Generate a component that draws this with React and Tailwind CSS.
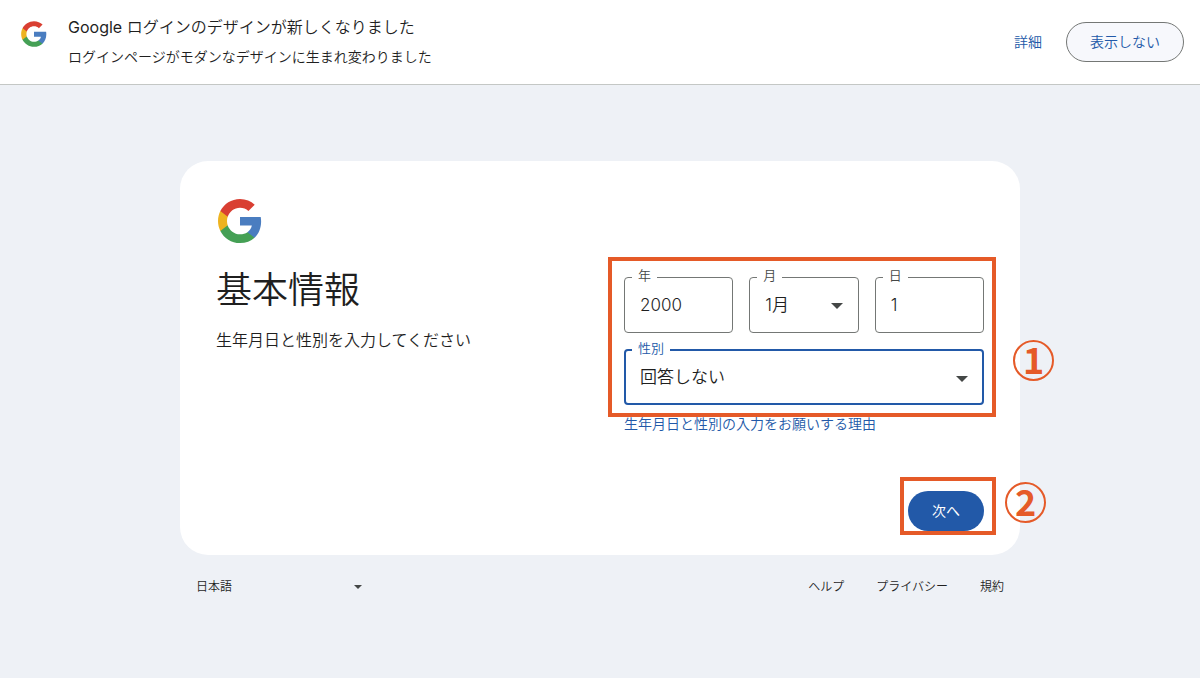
import { useState } from "react";

const months = ["1月", "2月", "3月", "4月", "5月", "6月", "7月", "8月", "9月", "10月", "11月", "12月"];
const genders = ["女性", "男性", "回答しない", "カスタム"];

const footerLinks = [
  { label: "ヘルプ", href: "#help" },
  { label: "プライバシー", href: "#privacy" },
  { label: "規約", href: "#terms" },
];

const GoogleLogo = ({ className }) => (
  <svg viewBox="0 0 48 48" className={className} aria-hidden="true">
    <path
      fill="#4a7dc0"
      d="M45.12 24.5c0-1.56-.14-3.06-.4-4.5H24v8.51h11.84c-.51 2.75-2.06 5.08-4.39 6.64v5.52h7.11c4.16-3.83 6.56-9.47 6.56-16.17z"
    />
    <path
      fill="#45a055"
      d="M24 46c5.94 0 10.92-1.97 14.56-5.33l-7.11-5.52c-1.97 1.32-4.49 2.1-7.45 2.1-5.73 0-10.58-3.87-12.31-9.07H4.34v5.7C7.96 41.07 15.4 46 24 46z"
    />
    <path
      fill="#eeb320"
      d="M11.69 28.18C11.25 26.86 11 25.45 11 24s.25-2.86.69-4.18v-5.7H4.34C2.85 17.09 2 20.45 2 24c0 3.55.85 6.91 2.34 9.88l7.35-5.7z"
    />
    <path
      fill="#d93f32"
      d="M24 10.75c3.23 0 6.13 1.11 8.41 3.29l6.31-6.31C34.91 4.18 29.93 2 24 2 15.4 2 7.96 6.93 4.34 14.12l7.35 5.7c1.73-5.2 6.58-9.07 12.31-9.07z"
    />
  </svg>
);

const Caret = ({ className }) => (
  <svg viewBox="0 0 12 6" className={className} aria-hidden="true">
    <path fill="#444746" d="M0 0h12L6 6z" />
  </svg>
);

// Outlined field, the legend cuts the notch for the label
const Field = ({ id, label, active, children }) => (
  <fieldset
    className={`min-w-0 rounded ${
      active ? "border-2 border-[#2259a8] text-[#2259a8]" : "border border-[#747775] text-[#444746]"
    }`}
  >
    <legend
      className={`px-[6px] pb-1 text-[13px] leading-3 ${active ? "ml-[6px]" : "ml-[7px]"}`}
    >
      <label htmlFor={id}>{label}</label>
    </legend>
    {children}
  </fieldset>
);

const TextField = ({ id, label, value, onChange }) => (
  <Field id={id} label={label}>
    <input
      id={id}
      type="text"
      inputMode="numeric"
      value={value}
      onChange={(e) => onChange(e.target.value)}
      className="block h-[47px] w-full bg-transparent px-[15px] pb-2 text-[17px] text-[#1f1f1f] outline-none"
    />
  </Field>
);

const SelectField = ({ id, label, value, options, onChange, active }) => (
  <Field id={id} label={label} active={active}>
    <div className="relative">
      <select
        id={id}
        value={value}
        onChange={(e) => onChange(e.target.value)}
        className={`block w-full appearance-none bg-transparent pr-8 pb-[6px] text-[17px] text-[#1f1f1f] outline-none ${
          active ? "h-[45px] pl-[14px]" : "h-[47px] pl-[15px]"
        }`}
      >
        {options.map((option) => (
          <option key={option}>{option}</option>
        ))}
      </select>
      <Caret
        className={`pointer-events-none absolute top-[18px] h-[6px] w-3 ${
          active ? "right-[14px]" : "right-[15px]"
        }`}
      />
    </div>
  </Field>
);

const StepNumber = ({ children, className }) => (
  <span
    className={`absolute flex size-[41px] items-center justify-center rounded-full border-2 border-[#e55a28] pb-[6px] font-['Noto_Sans_CJK_JP',sans-serif] text-4xl leading-9 font-bold text-[#e55a28] ${className}`}
  >
    {children}
  </span>
);

const App = () => {
  const [year, setYear] = useState("2000");
  const [month, setMonth] = useState("1月");
  const [day, setDay] = useState("1");
  const [gender, setGender] = useState("回答しない");
  const [language, setLanguage] = useState("日本語");

  return (
    <div className="min-h-screen bg-[#eef1f6] font-['Inter','Noto_Sans_CJK_JP',sans-serif] font-[350] text-[#1f1f1f]">
      <header className="flex items-center justify-between border-b border-[#c4c7c5] bg-white py-3 pr-4 pl-5">
        <div className="flex items-start gap-5">
          <GoogleLogo className="mt-2 size-7 shrink-0" />
          <div>
            <p className="text-base leading-[30px]">
              <span className="font-normal">Google</span> ログインのデザインが新しくなりました
            </p>
            <p className="text-sm leading-[30px]">ログインページがモダンなデザインに生まれ変わりました</p>
          </div>
        </div>
        <div className="flex shrink-0 items-center gap-6 text-sm text-[#2259a8]">
          <a href="#details">詳細</a>
          <button
            type="button"
            className="h-10 rounded-full border border-[#747775] bg-[#f7f8fc] px-[23px]"
          >
            表示しない
          </button>
        </div>
      </header>

      <main className="mx-auto max-w-[840px] pt-[76px]">
        <form
          className="rounded-[28px] bg-white px-9 pt-9 pb-6"
          onSubmit={(e) => e.preventDefault()}
        >
          <GoogleLogo className="size-12" />
          <div className="grid gap-12 pt-6 md:grid-cols-2">
            <div>
              <h1 className="text-4xl leading-[42px]">基本情報</h1>
              <p className="mt-4 text-base leading-[26px]">生年月日と性別を入力してください</p>
            </div>

            <div>
              <div className="relative">
                <div className="grid grid-cols-3 gap-4">
                  <TextField id="year" label="年" value={year} onChange={setYear} />
                  <SelectField
                    id="month"
                    label="月"
                    value={month}
                    options={months}
                    onChange={setMonth}
                  />
                  <TextField id="day" label="日" value={day} onChange={setDay} />
                </div>
                <div className="mt-[9px]">
                  <SelectField
                    id="gender"
                    label="性別"
                    value={gender}
                    options={genders}
                    onChange={setGender}
                    active
                  />
                </div>
                <div className="pointer-events-none absolute -top-3 -right-3 -bottom-3 -left-4 border-4 border-[#e55a28]" />
                <StepNumber className="top-[71px] -right-[70px]">1</StepNumber>
              </div>
              <a href="#why" className="mt-[7px] block text-sm leading-6 text-[#2259a8]">
                生年月日と性別の入力をお願いする理由
              </a>
            </div>
          </div>

          <div className="mt-[55px] flex justify-end">
            <div className="relative">
              <button
                type="submit"
                className="block h-10 rounded-full bg-[#2259a8] px-6 text-sm font-normal text-white"
              >
                次へ
              </button>
              <div className="pointer-events-none absolute -top-[14px] -right-3 -bottom-1 -left-2 border-4 border-[#e55a28]" />
              <StepNumber className="-top-[9px] -right-[62px]">2</StepNumber>
            </div>
          </div>
        </form>

        <footer className="flex items-center justify-between px-4 py-5 text-xs leading-6">
          <div className="relative w-[170px]">
            <select
              aria-label="言語"
              value={language}
              onChange={(e) => setLanguage(e.target.value)}
              className="block w-full appearance-none bg-transparent outline-none"
            >
              <option>日本語</option>
              <option>English</option>
            </select>
            <Caret className="pointer-events-none absolute top-[10px] right-1 h-1 w-2" />
          </div>
          <nav className="flex gap-8">
            {footerLinks.map((link) => (
              <a key={link.label} href={link.href}>
                {link.label}
              </a>
            ))}
          </nav>
        </footer>
      </main>
    </div>
  );
};

export default App;
